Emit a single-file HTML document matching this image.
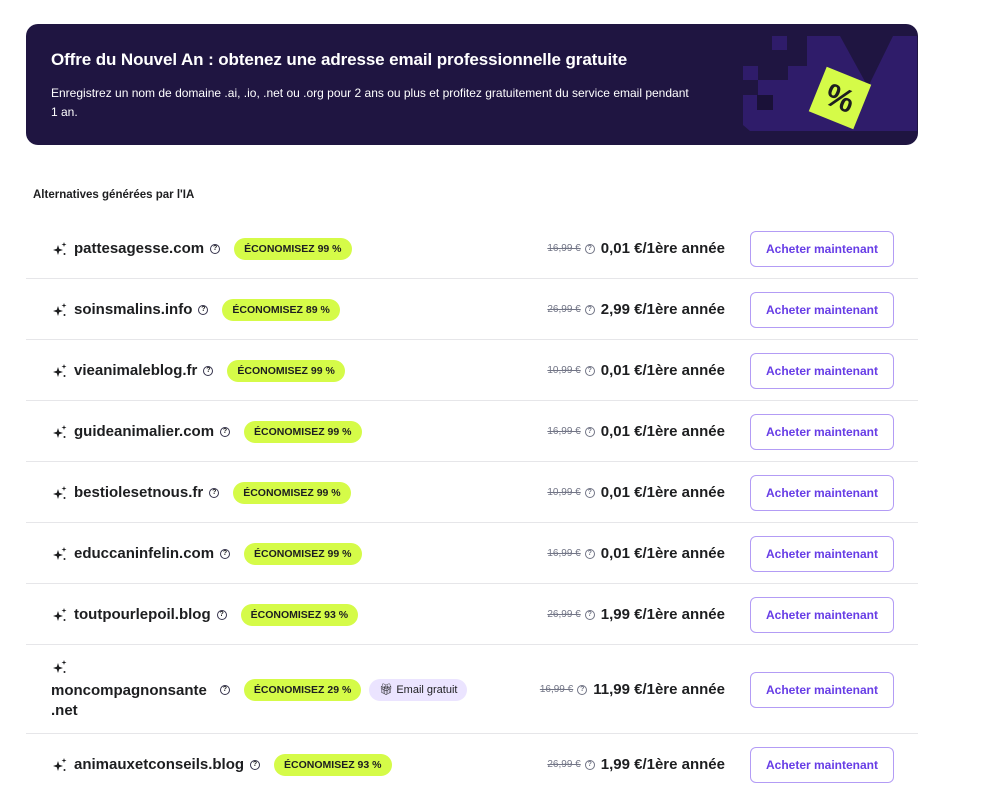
<!DOCTYPE html>
<html><head><meta charset="utf-8"><style>
*{box-sizing:border-box;margin:0;padding:0}
body{width:1000px;height:791px;background:#fff;font-family:"Liberation Sans",sans-serif;color:#1d1e20;position:relative;overflow:hidden}
.banner{position:absolute;left:26px;top:24px;width:892px;height:121px;background:#1f1541;border-radius:12px;overflow:hidden}
.banner h1{position:absolute;left:25px;top:26px;font-size:17px;font-weight:bold;color:#fff;letter-spacing:-0.1px}
.banner p{position:absolute;left:25px;top:60px;width:650px;font-size:12px;line-height:19px;color:#fff}
.lbl{position:absolute;left:33px;top:189px;font-size:11.5px;font-weight:bold;color:#1d1e20}
.row{position:absolute;left:26px;width:892px;border-bottom:1px solid #e6e6e9}
.row.last{border-bottom:none}
.dom{position:absolute;left:26px;display:flex;align-items:center;font-size:15px;font-weight:bold;color:#1d1e20}
.spark{width:16px;height:16px;margin-right:6px}
.q{display:inline-block;width:10px;height:10px;border:1.3px solid #36344d;border-radius:50%;font-size:7px;line-height:8px;text-align:center;font-weight:bold;margin-left:6px}
.badge{background:#d5fb48;border-radius:12px;height:22px;line-height:22px;padding:0 10px;font-size:10.5px;font-weight:bold;margin-left:14px;color:#1d1e20}
.gift{background:#ebe4ff;border-radius:12px;height:22px;line-height:22px;padding:0 10px;font-size:11px;margin-left:8px;color:#1d1e20;font-weight:normal}
.price{position:absolute;right:193px;display:flex;align-items:center}
.old{font-size:10px;color:#727586;text-decoration:line-through}
.price .q{margin:0 6px 0 4px;border-color:#727586;color:#727586}
.new{font-size:15px;font-weight:bold}
.btn{position:absolute;left:724px;width:144px;height:36px;border:1px solid #b39cf5;border-radius:6px;color:#673de6;font-size:12px;font-weight:bold;text-align:center;line-height:34px}
</style></head><body>
<div class="banner">
<h1>Offre du Nouvel An : obtenez une adresse email professionnelle gratuite</h1>
<p>Enregistrez un nom de domaine .ai, .io, .net ou .org pour 2 ans ou plus et profitez gratuitement du service email pendant 1&nbsp;an.</p>
<svg style="position:absolute;left:0;top:0" width="892" height="121" viewBox="26 24 892 121">
<polygon fill="#2f1c6a" points="818,36 840,36 868,87 893,36 917,36 917,131 750,131 743,125 743,95 758,95 758,80 788,80 788,66 807,66 807,36"/>
<rect x="772" y="36" width="15" height="14" fill="#2f1c6a"/>
<rect x="743" y="66" width="15" height="14" fill="#2f1c6a"/>
<rect x="757" y="95" width="16" height="15" fill="#1a1138"/>
<g transform="translate(840,98) rotate(22)">
<rect x="-24" y="-24" width="48" height="48" fill="#d5fb48"/>
<text x="0" y="11" text-anchor="middle" font-family="Liberation Sans" font-weight="bold" font-size="32" fill="#1d1e20">%</text>
</g>
</svg>
</div>
<div class="lbl">Alternatives générées par l'IA</div>

<div id="rows"></div>
<script>
const S='<svg class="spark" viewBox="0 0 16 16"><path d="M6 4 L7.2 7.8 L11 9 L7.2 10.2 L6 14 L4.8 10.2 L1 9 L4.8 7.8Z" fill="#1d1e20"/><path d="M12 1 L12.6 2.9 L14.5 3.5 L12.6 4.1 L12 6 L11.4 4.1 L9.5 3.5 L11.4 2.9Z" fill="#1d1e20"/><circle cx="12.5" cy="13" r="1" fill="#1d1e20"/></svg>';
const d=[["pattesagesse.com","99","16,99 €","0,01"],["soinsmalins.info","89","26,99 €","2,99"],["vieanimaleblog.fr","99","10,99 €","0,01"],["guideanimalier.com","99","16,99 €","0,01"],["bestiolesetnous.fr","99","10,99 €","0,01"],["educcaninfelin.com","99","16,99 €","0,01"],["toutpourlepoil.blog","93","26,99 €","1,99"],["moncompagnonsante.net","29","16,99 €","11,99"],["animauxetconseils.blog","93","26,99 €","1,99"]];
const tops=[218,279,340,401,462,523,584,645,734];
let h='';
d.forEach((r,i)=>{const t=tops[i];const ht=i==7?89:61;const c=ht/2;
let dom;
if(i==7){dom=`<div style="position:absolute;left:26px;top:14px">${S}</div><div class="dom" style="top:34px;left:25px">moncompagnonsante<span class="q" style="margin-left:13px">?</span><span class="badge">ÉCONOMISEZ 29 %</span><span class="gift">&#127873;&#xFE0E; Email gratuit</span></div><div style="position:absolute;left:25px;top:57px;font-size:15px;font-weight:bold">.net</div>`;}
else dom=`<div class="dom" style="top:${c-11}px;height:22px">${S}${r[0]}<span class="q">?</span><span class="badge">ÉCONOMISEZ ${r[1]} %</span></div>`;
h+=`<div class="row${i==8?' last':''}" style="top:${t}px;height:${ht}px">${dom}<div class="price" style="top:${c-10}px;height:20px"><span class="old">${r[2]}</span><span class="q">?</span><span class="new">${r[3]} €/1ère année</span></div><div class="btn" style="top:${c-18}px">Acheter maintenant</div></div>`;});
document.getElementById('rows').innerHTML=h;
</script>
</body></html>
